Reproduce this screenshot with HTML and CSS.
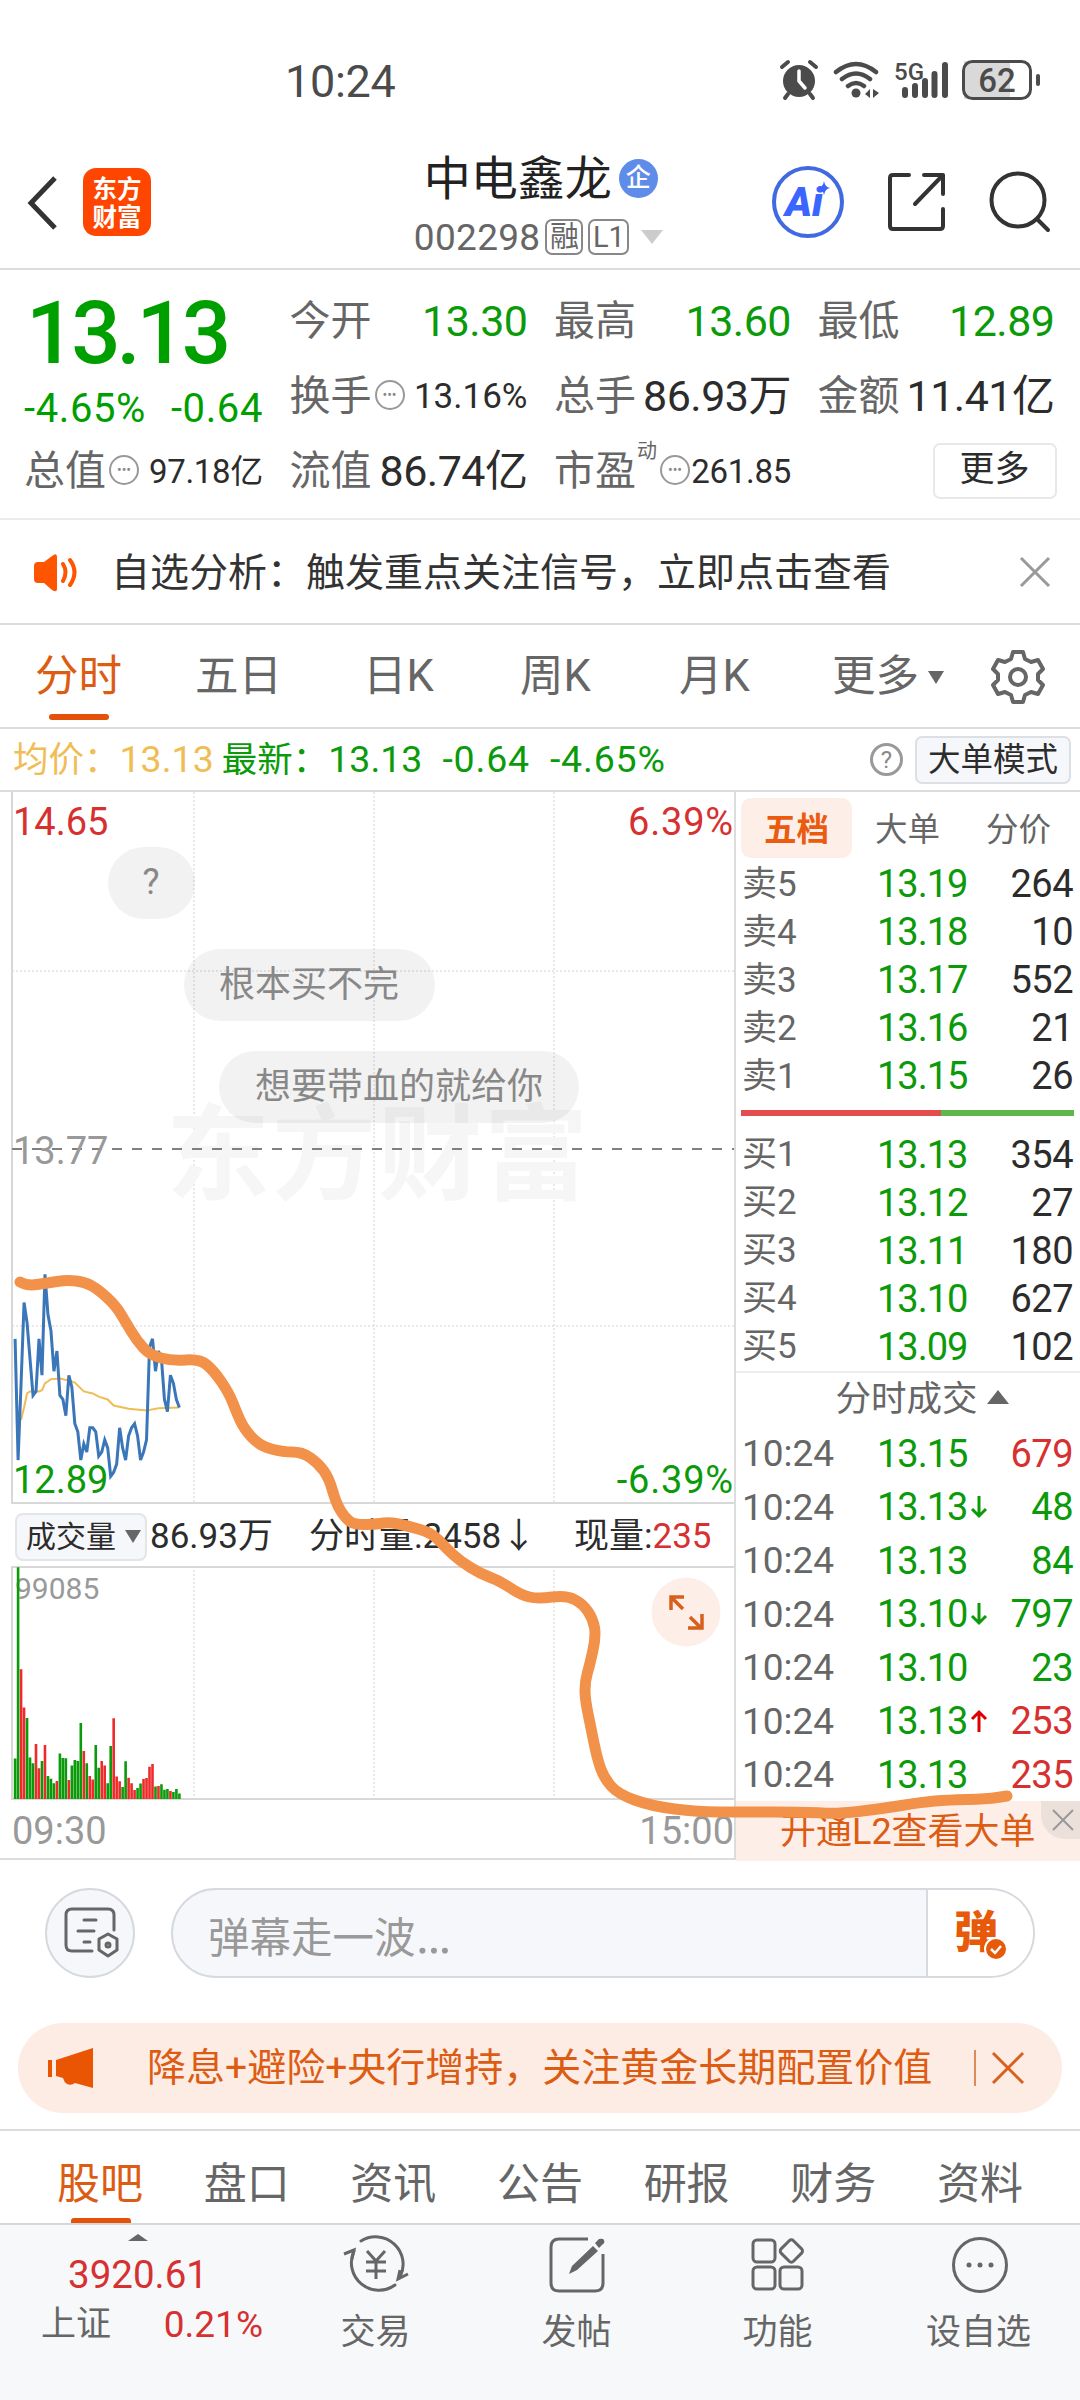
FILE: index.html
```html
<!DOCTYPE html>
<html lang="zh-CN">
<head>
  <meta charset="UTF-8">
  <meta name="viewport" content="width=device-width, initial-scale=1.0">
  <title>中电鑫龙 002298</title>
  <link rel="stylesheet" href="styles.css">
</head>
<body>
  <div class="status-bar">
    <span class="clock">10:24</span>
    <svg class="status-icons" width="270" height="50" viewBox="0 0 270 50">
      <g fill="#4b4b4b" stroke="#4b4b4b" stroke-linecap="round">
        <circle cx="28" cy="26" r="16" stroke="none"/>
        <path d="M11 12l6-5M39 7l6 5M17 39l-3 4M39 39l3 4" fill="none" stroke-width="4"/>
        <path d="M28 16v10l6 7" fill="none" stroke="#fff" stroke-width="3.5"/>
        <path d="M65 17q20-16 40 0M71 24q14-11 28 0M77 31q8-6 16 0" fill="none" stroke-width="4.5"/>
        <circle cx="85" cy="38" r="4.5" stroke="none"/>
        <path d="M99 34v9l-5-4zM102 34v9l6-5z" stroke="none"/>
        <path d="M134 35v5M144 31v9M154 26v14M163.500 19v21M174 10v30" fill="none" stroke-width="6"/>
      </g>
      <text x="123" y="25" class="net">5G</text>
      <rect x="193" y="6" width="46" height="38" fill="#d9d9d9"/>
      <rect x="192.500" y="6.500" width="67" height="37" rx="9" fill="none" stroke="#4b4b4b" stroke-width="3"/>
      <rect x="265" y="19" width="4" height="12" rx="2" fill="#4b4b4b"/>
      <text x="226" y="37" text-anchor="middle" class="battery">62</text>
    </svg>
  </div>

  <header class="header">
    <svg class="back" width="34" height="60" viewBox="0 0 34 60"><path d="M29 5L5 30l24 25" fill="none" stroke="#333" stroke-width="5"/></svg>
    <div class="logo">东方<br>财富</div>
    <div class="title">
      <div class="name">中电鑫龙<span class="qi">企</span></div>
      <div class="code">002298<span class="tag">融</span><span class="tag">L1</span><i class="down"></i></div>
    </div>
    <svg class="head-icons" width="290" height="80" viewBox="0 0 290 80">
      <circle cx="38" cy="40" r="34" fill="none" stroke="#4169e1" stroke-width="4"/>
      <text x="15" y="54" class="ai">Ai</text>
      <path d="M54 19q1 6 6 7q-5 1-6 7q-1-6-6-7q5-1 6-7z" fill="#3a66ff"/>
      <g fill="none" stroke="#333" stroke-width="4" stroke-linecap="round" stroke-linejoin="round">
        <path d="M139 13h-16q-3 0-3 3v48q0 3 3 3h47q3 0 3-3v-17M154 13h19v19M173 13L145 42"/>
        <circle cx="248" cy="38" r="26.500"/>
        <path d="M267 57l11 11"/>
      </g>
    </svg>
  </header>

  <section class="quote">
    <div class="price">
      <div class="now">13.13</div>
      <div class="change"><span>-4.65%</span><span>-0.64</span></div>
    </div>
    <div class="item"><label>今开</label><b class="green">13.30</b></div>
    <div class="item"><label>最高</label><b class="green">13.60</b></div>
    <div class="item"><label>最低</label><b class="green">12.89</b></div>
    <div class="item"><label>换手</label><i class="dots">•••</i><b class="small">13.16%</b></div>
    <div class="item"><label>总手</label><b>86.93万</b></div>
    <div class="item"><label>金额</label><b>11.41亿</b></div>
    <div class="item"><label>总值</label><i class="dots">•••</i><b class="small narrow">97.18亿</b></div>
    <div class="item"><label>流值</label><b>86.74亿</b></div>
    <div class="item"><label>市盈</label><sup>动</sup><i class="dots">•••</i><b class="small narrow">261.85</b></div>
    <div class="item"><span class="more-btn">更多</span></div>
  </section>

  <section class="notice">
    <svg width="46" height="40" viewBox="0 0 46 40">
      <path d="M1 14q0-4 4-4h6L19 4q5-4 5 1v32q0 4-5 1L11 31H5q-4 0-4-4z" fill="#ff5400"/>
      <path d="M30 12q5 8 0 17M37 8q9 12 0 25" fill="none" stroke="#ff5400" stroke-width="4" stroke-linecap="round"/>
    </svg>
    <p>自选分析：触发重点关注信号，立即点击查看</p>
    <svg class="close" width="32" height="32" viewBox="0 0 32 32"><path d="M2 2l28 28M30 2L2 30" stroke="#999" stroke-width="3"/></svg>
  </section>

  <nav class="period">
    <span class="active">分时</span>
    <span>五日</span>
    <span>日K</span>
    <span>周K</span>
    <span>月K</span>
    <span>更多<i class="tri"></i></span>
    <svg width="56" height="56" viewBox="0 0 56 56">
      <path d="M23 3h10l2 7 6 3 7-2 5 9-5 5v6l5 5-5 9-7-2-6 3-2 7H23l-2-7-6-3-7 2-5-9 5-5v-6l-5-5 5-9 7 2 6-3z" fill="none" stroke="#666" stroke-width="4" stroke-linejoin="round"/>
      <circle cx="28" cy="28" r="8" fill="none" stroke="#666" stroke-width="4"/>
    </svg>
  </nav>

  <div class="info">
    <span class="avg">均价：<em>13.13</em></span>
    <span class="last">最新：<em>13.13</em><em>-0.64</em><em>-4.65%</em></span>
    <i class="help">?</i>
    <span class="mode-btn">大单模式</span>
  </div>

  <main class="market">
    <div class="charts">
      <svg class="chart" width="735" height="713" viewBox="0 0 735 713">
        <g class="grid">
          <path d="M194 0v711M374 0v711M554 0v711M12 179h722M12 534h722"/>
        </g>
        <path d="M12 0v711H734" fill="none" stroke="#d8d8d8" stroke-width="2"/>
        <text class="watermark" x="166" y="400" textLength="422">东方财富</text>
        <g class="danmaku">
          <rect x="108" y="55" width="87" height="72" rx="36"/><text x="151" y="102">?</text>
          <rect x="184" y="157" width="251" height="72" rx="36"/><text x="309" y="205">根本买不完</text>
          <rect x="219" y="259" width="360" height="72" rx="36"/><text x="399" y="307">想要带血的就给你</text>
        </g>
        <path d="M12 357h722" stroke="#808080" stroke-width="2" stroke-dasharray="10 10"/>
        <text class="axis red" x="13" y="43">14.65</text>
        <text class="axis red wide end" x="734" y="43">6.39%</text>
        <text class="axis gray" x="13" y="372">13.77</text>
        <path id="avgLine" fill="none" stroke="#f0bd55" stroke-width="2"/>
        <path id="priceLine" fill="none" stroke="#3a76b8" stroke-width="3"/>
        <text class="axis green" x="13" y="701">12.89</text>
        <text class="axis green wide end" x="734" y="701">-6.39%</text>
      </svg>
      <div class="vol-head">
        <span class="vol-btn">成交量<i class="tri"></i></span>
        <span class="v1">86.93万</span>
        <span class="v2">分时量:2458↓</span>
        <span class="v3">现量:<em class="red">235</em></span>
      </div>
      <svg class="chart" width="735" height="235" viewBox="0 0 735 235">
        <path class="grid" d="M194 0v233M374 0v233M554 0v233"/>
        <path d="M734 1H12v232H734" fill="none" stroke="#d8d8d8" stroke-width="2"/>
        <text class="vol-max" x="15" y="33">99085</text>
        <path id="volUp" stroke="#ee2a2a" stroke-width="2.600"/>
        <path id="volDown" stroke="#0a9a0a" stroke-width="2.600"/>
        <circle cx="686" cy="46" r="34.500" fill="#fdeee7"/>
        <path d="M683 43L672 32M671 44V31h13M690 51l11 11M702 48v14h-14" fill="none" stroke="#d95f1e" stroke-width="3.500"/>
      </svg>
      <div class="times"><span>09:30</span><span>15:00</span></div>
    </div>

    <aside class="book">
      <div class="book-tabs"><span class="active">五档</span><span>大单</span><span>分价</span></div>
      <div class="level"><span>卖5</span><b>13.19</b><i>264</i></div>
      <div class="level"><span>卖4</span><b>13.18</b><i>10</i></div>
      <div class="level"><span>卖3</span><b>13.17</b><i>552</i></div>
      <div class="level"><span>卖2</span><b>13.16</b><i>21</i></div>
      <div class="level"><span>卖1</span><b>13.15</b><i>26</i></div>
      <div class="ratio"></div>
      <div class="level"><span>买1</span><b>13.13</b><i>354</i></div>
      <div class="level"><span>买2</span><b>13.12</b><i>27</i></div>
      <div class="level"><span>买3</span><b>13.11</b><i>180</i></div>
      <div class="level"><span>买4</span><b>13.10</b><i>627</i></div>
      <div class="level"><span>买5</span><b>13.09</b><i>102</i></div>
      <div class="deals-head">分时成交<i class="up"></i></div>
      <div class="deal"><span>10:24</span><b>13.15</b><i class="red">679</i></div>
      <div class="deal"><span>10:24</span><b>13.13<svg width="18" height="24" viewBox="0 0 18 24"><path d="M9 1v20M2 14l7 7 7-7" fill="none" stroke="#0a9a0a" stroke-width="3"/></svg></b><i class="green">48</i></div>
      <div class="deal"><span>10:24</span><b>13.13</b><i class="green">84</i></div>
      <div class="deal"><span>10:24</span><b>13.10<svg width="18" height="24" viewBox="0 0 18 24"><path d="M9 1v20M2 14l7 7 7-7" fill="none" stroke="#0a9a0a" stroke-width="3"/></svg></b><i class="green">797</i></div>
      <div class="deal"><span>10:24</span><b>13.10</b><i class="green">23</i></div>
      <div class="deal"><span>10:24</span><b>13.13<svg width="18" height="24" viewBox="0 0 18 24"><path d="M9 23V3M2 10l7-7 7 7" fill="none" stroke="#d00" stroke-width="3"/></svg></b><i class="red">253</i></div>
      <div class="deal"><span>10:24</span><b>13.13</b><i class="red">235</i></div>
      <div class="l2">开通L2查看大单
        <span class="l2-close"><svg width="24" height="24" viewBox="0 0 24 24"><path d="M2 2l20 20M22 2L2 22" stroke="#999" stroke-width="2"/></svg></span>
      </div>
    </aside>

    <!-- hand-drawn trend line -->
    <svg class="sketch" width="1080" height="1069" viewBox="0 791 1080 1069">
      <path id="sketchLine" fill="none" stroke="#f29149" stroke-width="11" stroke-linecap="round" stroke-linejoin="round"/>
    </svg>
  </main>

  <div class="comment">
    <span class="set-btn">
      <svg width="58" height="54" viewBox="0 0 58 54" fill="none" stroke="#666" stroke-width="3" stroke-linecap="round">
        <path d="M51 24V9q0-6-6-6H9Q3 3 3 9v30q0 6 6 6h20"/>
        <path d="M21 14h12M15 25h16M21 36h6"/>
        <path d="M45 28l9 5v11l-9 6-9-6V33z" stroke-linejoin="round"/><circle cx="45" cy="39" r="2"/>
      </svg>
    </span>
    <div class="input">
      <span class="placeholder">弹幕走一波<em>…</em></span>
      <span class="send">弹<svg width="24" height="24" viewBox="0 0 24 24"><circle cx="12" cy="12" r="11" fill="#e65a0a" stroke="#fff" stroke-width="2"/><path d="M7 12l4 4 6-7" fill="none" stroke="#fff" stroke-width="2.500"/></svg></span>
    </div>
  </div>

  <div class="banner">
    <svg width="48" height="42" viewBox="0 0 48 42"><path d="M1 13h4v17H1zM9 13L46 1v40l-18-5q-4 3-8 1-3-2-4-6l-7-2z" fill="#ea5504"/></svg>
    <p>降息+避险+央行增持，关注黄金长期配置价值</p>
    <i class="line"></i>
    <svg width="34" height="34" viewBox="0 0 34 34"><path d="M2 2l30 30M32 2L2 32" stroke="#d95f1e" stroke-width="3"/></svg>
  </div>

  <nav class="sections">
    <span class="active">股吧</span>
    <span>盘口</span>
    <span>资讯</span>
    <span>公告</span>
    <span>研报</span>
    <span>财务</span>
    <span>资料</span>
  </nav>

  <footer class="toolbar">
    <div class="index">
      <i class="up"></i>
      <div class="idx">3920.61</div>
      <div class="sub"><span>上证</span><em>0.21%</em></div>
    </div>
    <div class="tool">
      <svg width="70" height="64" viewBox="0 0 70 64" fill="none" stroke="#666" stroke-width="3">
        <path d="M20 8a27.500 27.500 0 0 1 39 36M54 52A27.500 27.500 0 0 1 13 18" stroke-linecap="round"/>
        <path d="M3 21l10-4-2 9M67 41l-10 5 2-9"/>
        <path d="M26 18l9 10 9-10M35 28v18M25 29h20M25 38h20"/>
      </svg>
      <span>交易</span>
    </div>
    <div class="tool">
      <svg width="70" height="64" viewBox="0 0 70 64">
        <path d="M46 6H17q-8 0-8 8v36q0 8 8 8h36q8 0 8-8V21" fill="none" stroke="#666" stroke-width="3"/>
        <path d="M51 13l5 5L35 37l-8 4 3-8zM53 10l4-4q4-1 5 1 1 3-1 4l-4 4z" fill="#666"/>
      </svg>
      <span>发帖</span>
    </div>
    <div class="tool">
      <svg width="70" height="64" viewBox="0 0 70 64" fill="none" stroke="#666" stroke-width="3">
        <rect x="10" y="7" width="22" height="22" rx="4"/>
        <rect x="10" y="34" width="22" height="22" rx="4"/>
        <rect x="37" y="34" width="22" height="22" rx="4"/>
        <rect x="39.500" y="9" width="17.500" height="17.500" rx="3" transform="rotate(45 48 18)"/>
      </svg>
      <span>功能</span>
    </div>
    <div class="tool">
      <svg width="70" height="64" viewBox="0 0 70 64">
        <circle cx="36" cy="32" r="26.500" fill="none" stroke="#666" stroke-width="3"/>
        <g fill="#666"><circle cx="25" cy="32" r="2.500"/><circle cx="36" cy="32" r="2.500"/><circle cx="47" cy="32" r="2.500"/></g>
      </svg>
      <span>设自选</span>
    </div>
  </footer>

  <script src="script.js"></script>
</body>
</html>
```
FILE: styles.css
```css
* {
  box-sizing: border-box;
}
body {
  margin: 0;
  width: 1080px;
  height: 2400px;
  overflow: hidden;
  background: #fff;
  color: #2c2c2c;
  font-family: Roboto, "Noto Sans CJK SC", sans-serif;
  font-size: 38px;
  line-height: 1;
}
i, em, b {
  font-style: normal;
  font-weight: normal;
}
p {
  margin: 0;
}
svg {
  display: block;
  flex: none;
}
.red { color: #d63030; fill: #d63030; }
.green { color: #0a9a0a; fill: #0a9a0a; }
.gray { fill: #999; }

/* status bar */
.status-bar {
  display: flex;
  justify-content: space-between;
  align-items: center;
  height: 160px;
  padding: 0 39px 0 285px;
}
.clock {
  padding-top: 2px;
  font-size: 45px;
  color: #4b4b4b;
  letter-spacing: -0.300px;
}
.net {
  font-size: 24px;
  font-weight: 500;
  fill: #4b4b4b;
}
.battery {
  font-size: 33px;
  font-weight: 500;
  fill: #4b4b4b;
}

/* header */
.header {
  display: flex;
  height: 110px;
  padding: 0 20px 0 26px;
  border-bottom: 2px solid #dcdcdc;
}
.back {
  margin-top: 13px;
}
.logo {
  width: 68px;
  height: 68px;
  margin: 8px 0 0 23px;
  padding-top: 8px;
  border-radius: 13px;
  background: #ff4600;
  color: #fff;
  font-size: 24.500px;
  line-height: 28px;
  font-weight: 700;
  text-align: center;
}
.title {
  width: 500px;
  margin-left: 141px;
  padding-left: 122px;
}
.name {
  display: flex;
  align-items: center;
  height: 36px;
  margin-left: 10px;
  color: #222;
  font-size: 47px;
  white-space: nowrap;
}
.qi {
  width: 39px;
  height: 39px;
  margin-left: 7px;
  border-radius: 50%;
  background: #5f8ce8;
  color: #fff;
  font-size: 25px;
  line-height: 38px;
  font-weight: 500;
  text-align: center;
}
.code {
  display: flex;
  align-items: center;
  margin-top: 20px;
  height: 42px;
  color: #666;
  font-size: 37px;
  letter-spacing: 0.3px;
}
.tag {
  width: 38px;
  height: 36px;
  margin-left: 5px;
  border: 2px solid #888;
  border-radius: 7px;
  font-size: 29px;
  line-height: 32px;
  letter-spacing: 0;
  text-align: center;
}
.tag + .tag {
  width: 41px;
}
.down {
  margin-left: 12px;
  border: 11px solid transparent;
  border-top: 14px solid #ccc;
  border-bottom: 0;
}
.head-icons {
  margin: 2px 0 0 -21px;
}
.ai {
  font-size: 41px;
  font-weight: 900;
  font-style: italic;
  fill: #3a66ff;
}

/* quote */
.quote {
  display: grid;
  grid-template-columns: 239px 238px 237px 237px;
  grid-template-rows: repeat(3, 75px);
  column-gap: 26.500px;
  height: 250px;
  padding: 14px 24px 0;
  border-bottom: 2px solid #ececec;
}
.price {
  grid-row: span 2;
  color: #009f00;
}
.now {
  margin: 5px 0 0 2px;
  font-size: 87px;
  font-weight: 500;
  line-height: 88px;
  letter-spacing: -4.200px;
}
.change {
  display: flex;
  justify-content: space-between;
  padding-top: 12px;
  font-size: 40px;
  letter-spacing: 0.600px;
}
.item {
  display: flex;
  align-items: center;
  font-size: 43px;
  white-space: nowrap;
}
.item label {
  color: #666;
  font-size: 41px;
}
.item b {
  margin-left: auto;
  letter-spacing: -0.500px;
}
.item b.small {
  font-size: 35px;
  letter-spacing: 0;
}
.item b.narrow {
  font-size: 33px;
  letter-spacing: -0.300px;
}
.item sup {
  align-self: flex-start;
  width: 20px;
  margin: 5px 0 0 1px;
  color: #666;
  font-size: 20px;
  line-height: 24px;
}
.dots {
  width: 30px;
  height: 30px;
  margin: -4px 0 0 3px;
  border: 2px solid #999;
  border-radius: 50%;
  color: #888;
  font-size: 14px;
  line-height: 26px;
  text-align: center;
}
.more-btn {
  width: 124px;
  height: 56px;
  margin: -2px -2px 0 auto;
  border: 2px solid #e6e8ea;
  border-radius: 7px;
  font-size: 35px;
  line-height: 50px;
  text-align: center;
}

/* notice */
.notice {
  display: flex;
  align-items: center;
  height: 105px;
  padding: 0 29px 0 33px;
  border-bottom: 2px solid #dcdcdc;
  color: #333;
}
.notice p {
  margin-left: 32px;
  padding-top: 4px;
  font-size: 39px;
}
.close {
  margin-left: auto;
}

/* period tabs */
.period {
  display: grid;
  grid-template-columns: 160px 168px 157px 159px 153px 158px 56px;
  align-items: center;
  height: 104px;
  padding: 2px 0 0 35px;
  border-bottom: 2px solid #dcdcdc;
  color: #666;
  font-size: 43.500px;
}
.period span {
  display: flex;
  align-items: center;
  height: 100%;
}
.period .active,
.sections .active {
  position: relative;
  color: #dc5c14;
}
.period .active::after,
.sections .active::after {
  content: "";
  position: absolute;
  left: 14px;
  bottom: 7px;
  width: 60px;
  height: 6px;
  border-radius: 3px;
  background: #e35208;
}
.tri {
  margin-left: 9px;
  border: 8px solid transparent;
  border-top: 13px solid #666;
  border-bottom: 0;
}

/* info row */
.info {
  display: flex;
  align-items: center;
  height: 63px;
  padding: 0 9px 0 13px;
  border-bottom: 2px solid #dcdcdc;
  font-size: 35.500px;
}
.info em {
  font-size: 37.500px;
}
.avg {
  color: #f0bd55;
}
.last {
  margin-left: 8px;
  color: #0a9a0a;
}
.last em + em {
  margin-left: 20px;
  letter-spacing: 0.800px;
}
.help {
  width: 33px;
  height: 33px;
  margin-left: auto;
  border: 3px solid #999;
  border-radius: 50%;
  color: #888;
  font-size: 24px;
  line-height: 28px;
  text-align: center;
}
.mode-btn {
  width: 156px;
  height: 48px;
  margin-left: 12px;
  border: 2px solid #dcdfe3;
  border-radius: 7px;
  background: #f6f7fa;
  font-size: 32.500px;
  line-height: 45px;
  text-align: center;
}

/* charts */
.market {
  position: relative;
  display: flex;
  height: 1068px;
  border-bottom: 2px solid #dcdcdc;
}
.charts {
  width: 736px;
  border-right: 2px solid #dcdcdc;
}
.grid {
  fill: none;
  stroke: #d2d2d2;
  stroke-width: 1;
  stroke-dasharray: 2 2;
}
.axis {
  font-size: 38px;
}
.wide {
  letter-spacing: 0.800px;
}
.end {
  text-anchor: end;
}
.watermark {
  font-size: 104px;
  font-weight: 700;
  fill: #f6f6f6;
}
.danmaku rect {
  fill: #000;
  fill-opacity: 0.05;
}
.danmaku text {
  font-size: 36px;
  fill: #888;
  text-anchor: middle;
}
.vol-head {
  display: flex;
  align-items: center;
  height: 61px;
  padding: 2px 0 0 15px;
  font-size: 35px;
}
.vol-btn {
  display: flex;
  align-items: center;
  width: 132px;
  height: 48px;
  padding-left: 9px;
  border: 2px solid #e3e5e8;
  border-radius: 8px;
  background: #f6f7fa;
  font-size: 30px;
}
.v1 {
  width: 159px;
  margin-left: 3px;
}
.v2 {
  width: 265px;
}
.vol-max {
  font-size: 30px;
  fill: #999;
}
.times {
  display: flex;
  justify-content: space-between;
  align-items: center;
  height: 58px;
  padding: 2px 0 0 12px;
  color: #999;
}

/* order book */
.book {
  flex: 1;
}
.book-tabs {
  display: flex;
  height: 68px;
  padding: 6px 0 0 5px;
  color: #666;
  font-size: 32.500px;
  text-align: center;
}
.book-tabs span {
  width: 111px;
  height: 60px;
  line-height: 64px;
}
.book-tabs .active {
  border-radius: 10px;
  background: #fdeee7;
  color: #ea5b10;
  font-weight: 700;
}
.level,
.deal {
  display: grid;
  grid-template-columns: 135px 110px 1fr;
  align-items: center;
  height: 48.100px;
  padding: 0 7px 0 6px;
  font-size: 38px;
}
.level span,
.deal span {
  color: #666;
  font-size: 37px;
}
.level span {
  font-size: 35px;
}
.level b,
.deal b {
  display: flex;
  align-items: center;
  gap: 3px;
  color: #0a9a0a;
  letter-spacing: -1px;
}
.level i,
.deal i {
  text-align: right;
  letter-spacing: -0.500px;
}
.ratio {
  height: 6px;
  margin: 10px 6px 14px 5px;
  background: linear-gradient(90deg, #e34d4d 60%, #5fb74c 60%);
}
.deals-head {
  display: flex;
  align-items: center;
  justify-content: center;
  height: 56px;
  border-top: 2px solid #ececec;
  padding-left: 28px;
  color: #666;
  font-size: 35.500px;
}
.up {
  margin-left: 9px;
  border: 11px solid transparent;
  border-bottom: 14px solid #666;
  border-top: 0;
}
.deals-head .up {
  margin-bottom: 6px;
}
.deal {
  height: 53.500px;
}
.l2 {
  position: relative;
  height: 60px;
  padding-left: 44px;
  background: #fdeee7;
  color: #dc5c14;
  font-size: 36px;
  line-height: 62px;
}
.l2-close {
  position: absolute;
  top: 0;
  right: 0;
  display: flex;
  align-items: center;
  justify-content: center;
  width: 39px;
  height: 38px;
  padding-left: 4px;
  border-bottom-left-radius: 24px;
  background: #ece0da;
}
.sketch {
  position: absolute;
  left: 0;
  top: 0;
}

/* comment */
.comment {
  display: flex;
  height: 163px;
  padding: 28px 45px 0;
}
.set-btn {
  display: flex;
  align-items: center;
  justify-content: center;
  width: 90px;
  height: 90px;
  padding-left: 3px;
  border: 2px solid #d6d9dd;
  border-radius: 50%;
  background: #f6f7fa;
}
.input {
  display: flex;
  flex: 1;
  height: 90px;
  margin-left: 36px;
  overflow: hidden;
  border: 2px solid #d6d9dd;
  border-radius: 45px;
  background: #f6f7fa;
}
.placeholder {
  flex: 1;
  padding-left: 35px;
  color: #999;
  font-size: 41.500px;
  line-height: 90px;
}
.placeholder em {
  font-size: 54px;
}
.send {
  display: flex;
  align-items: center;
  width: 107px;
  padding-left: 26px;
  border-left: 2px solid #d6d9dd;
  background: #fff;
  color: #e65a0a;
  font-size: 44px;
  font-weight: 900;
}
.send svg {
  margin: 32px 0 0 -14px;
}

/* banner */
.banner {
  display: flex;
  align-items: center;
  width: 1044px;
  height: 90px;
  margin-left: 18px;
  padding-left: 29px;
  border-radius: 45px;
  background: #fdece3;
  color: #dc5c14;
}
.banner p {
  margin-left: 52px;
  width: 827px;
  font-size: 39px;
  white-space: nowrap;
}
.line {
  width: 2px;
  height: 36px;
  margin-right: 15px;
  background: #dc8a5c;
}

/* section tabs */
.sections {
  display: flex;
  justify-content: space-between;
  height: 96px;
  margin-top: 16px;
  padding: 0 57px;
  border-top: 2px solid #dcdcdc;
  border-bottom: 2px solid #d3d8dd;
  color: #666;
  font-size: 43px;
  line-height: 107px;
}
.sections .active::after {
  bottom: 0;
  height: 5px;
  border-radius: 3px 3px 0 0;
}

/* toolbar */
.toolbar {
  display: flex;
  height: 175px;
  background: #f7f8fa;
  color: #666;
}
.index {
  width: 275px;
}
.index .up {
  display: block;
  width: 20px;
  margin: 9px 0 0 128px;
  border-width: 0 10px 7px;
}
.idx {
  margin: 15px 0 0 68px;
  color: #d63030;
  font-size: 38.500px;
}
.sub {
  display: flex;
  justify-content: space-between;
  align-items: center;
  margin-top: 11px;
  padding: 0 12px 0 41px;
  font-size: 35px;
}
.sub em {
  color: #d63030;
  font-size: 37px;
}
.tool {
  display: flex;
  flex-direction: column;
  align-items: center;
  width: 201px;
  padding-top: 8px;
  font-size: 35px;
}
.tool span {
  margin-top: 18px;
}
```
FILE: script.js
```js
// one value per minute from 09:30
const prices = [
  13.30, 13.00, 13.19, 13.39, 13.34, 13.25, 13.16, 13.17, 13.30, 13.21,
  13.46, 13.36, 13.32, 13.22, 13.27, 13.16, 13.15, 13.11, 13.21, 13.18,
  13.09, 13.07, 13.00, 13.04, 13.02, 13.08, 13.08, 13.07, 13.01, 13.02,
  13.05, 13.03, 12.96, 12.97, 12.99, 13.08, 13.03, 13.00, 13.06, 13.08,
  13.09, 13.06, 13.00, 13.02, 13.05, 13.28, 13.30, 13.22, 13.27, 13.25,
  13.15, 13.12, 13.21, 13.19, 13.15, 13.13
];
const averages = [
  [2, 13.10], [3, 13.13], [4, 13.165], [5, 13.17], [8, 13.17], [9, 13.173], [10, 13.19],
  [12, 13.2], [15, 13.202], [18, 13.197], [20, 13.192], [23, 13.17], [26, 13.165],
  [28, 13.157], [31, 13.15], [33, 13.135], [38, 13.127], [44, 13.123], [48, 13.128], [55, 13.13]
];
// thousands of lots
const volumes = [
  17.3, 99.1, 55.5, 39.1, 34.6, 17.8, 15.3, 23.5, 13.1, 16.3, 23.1, 9.8, 8.7, 6.7, 7.7,
  19.5, 17.5, 17.4, 8.1, 14.3, 16.7, 16.3, 32.5, 20.5, 15.3, 9.8, 8.3, 23.1, 13.4, 16.3,
  14.3, 6.7, 22.7, 34.5, 9.6, 7.6, 5.1, 16.1, 9.1, 6.7, 3.9, 4.7, 6.6, 8.6, 9,
  13.8, 15, 5.3, 5.6, 6.3, 4, 4.3, 3.4, 3, 4.3, 2.4
];
const sides = "ggrrgggrrgrgggrgggrggggrgrrggrrggrrrggrrrggrrrrgrgggrggg";

const x = i => 15.1 + i * 2.987;
const y = p => 357 + (13.77 - p) * 404;

document.getElementById("priceLine").setAttribute("d",
  "M" + prices.map((p, i) => x(i) + " " + y(p)).join("L"));
document.getElementById("avgLine").setAttribute("d",
  "M" + averages.map(([i, p]) => x(i) + " " + y(p)).join("L"));

let up = "", down = "";
volumes.forEach((v, i) => {
  const bar = "M" + x(i) + " 233v" + (-v * 2.338);
  if (sides[i] === "r") up += bar;
  else down += bar;
});
document.getElementById("volUp").setAttribute("d", up);
document.getElementById("volDown").setAttribute("d", down);

const sketch = [
  [20, 1281], [27, 1285], [47, 1282], [67, 1279], [85, 1281], [99, 1289], [116, 1305],
  [125, 1320], [137, 1340], [150, 1354], [172, 1360], [200, 1358], [214, 1370], [229, 1392],
  [236, 1410], [244, 1428], [260, 1445], [283, 1451], [302, 1451], [318, 1462], [329, 1477],
  [336, 1502], [345, 1517], [355, 1524], [378, 1523], [389, 1521], [408, 1525], [432, 1532],
  [446, 1547], [460, 1560], [481, 1573], [500, 1580], [521, 1594], [538, 1598], [566, 1594],
  [583, 1603], [593, 1618], [596, 1635], [590, 1663], [585, 1680], [585, 1698], [591, 1727],
  [597, 1757], [604, 1777], [618, 1793], [651, 1805], [698, 1811], [740, 1811], [807, 1811],
  [837, 1813], [880, 1808], [923, 1801], [947, 1799], [987, 1798], [1007, 1795]
];
// smooth through the midpoints
let d = "M" + sketch[0];
for (let i = 1; i < sketch.length - 1; i++) {
  const [ax, ay] = sketch[i], [bx, by] = sketch[i + 1];
  d += "Q" + ax + " " + ay + " " + (ax + bx) / 2 + " " + (ay + by) / 2;
}
d += "L" + sketch[sketch.length - 1];
document.getElementById("sketchLine").setAttribute("d", d);
```
